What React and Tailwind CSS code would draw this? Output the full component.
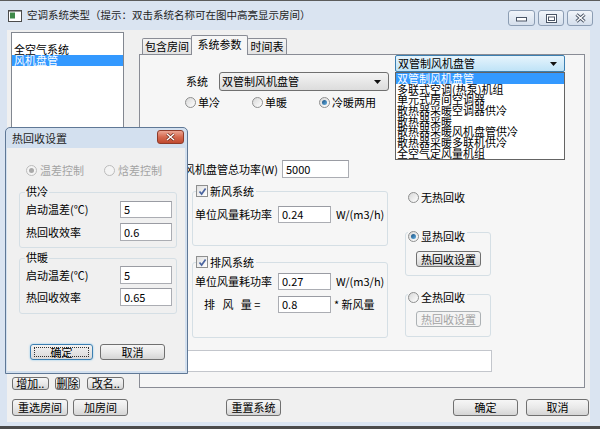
import React from "react";

const FONT = "font-['Noto_Sans_CJK_SC','Noto_Sans',sans-serif]";

function Radio({ checked, disabled }) {
    return (
        <span className={`inline-flex w-[11px] h-[11px] shrink-0 rounded-full border items-center justify-center ${disabled ? 'border-[#bcbcbc] bg-[#f4f4f4]' : 'border-[#8e8f8f] bg-linear-to-br from-[#d8d8d8] to-white'}`}>
            {checked && (
                <span className={`w-[5px] h-[5px] rounded-full ${disabled ? 'bg-[#a9a9a9]' : 'bg-linear-to-br from-[#1b4f7e] to-[#63b2e6]'}`} />
            )}
        </span>
    );
}

function Check() {
    return (
        <span className="inline-flex w-[12px] h-[12px] shrink-0 border border-[#8e8f8f] bg-linear-to-br from-[#e0e0e0] to-white items-center justify-center">
            <svg width="9" height="9" viewBox="0 0 9 9">
                <path d="M1.5 4.5 L3.6 7 L7.6 1.5" stroke="#4b65a0" strokeWidth="1.7" fill="none" />
            </svg>
        </span>
    );
}

function Btn({ children, className = "", disabled, focused }) {
    let look = "border-[#707070] bg-linear-to-b from-[#f6f6f6] via-[#e9e9e9] to-[#d5d5d5]";
    if (disabled) look = "border-[#adb2b5] bg-[#f4f4f4] text-[#a3a3a3]";
    if (focused) look = "border-[#3c7fb1] bg-linear-to-b from-[#f2f2f2] to-[#d9d9d9] shadow-[0_0_2px_#7cc0ec]";
    return (
        <div className={`flex items-center justify-center rounded-[3px] border text-[11px] leading-none ${look} ${className}`}>
            {focused ? (
                <span className="w-[calc(100%-6px)] h-[calc(100%-4px)] border border-dotted border-[#333] flex items-center justify-center">{children}</span>
            ) : children}
        </div>
    );
}

function Field({ value, className = "" }) {
    return (
        <div className={`bg-white border border-[#abadb3] border-t-[#9a9ca3] text-[11px] leading-none flex items-center pl-[3px] ${className}`}>
            {value}
        </div>
    );
}

function CapBtn({ children, className = "" }) {
    return (
        <div className={`h-[16px] rounded-[3px] border border-[#8c9db3] bg-linear-to-b from-[#f1f5fa] to-[#d5dfec] flex items-center justify-center ${className}`}>
            {children}
        </div>
    );
}

const comboItems = [
    '双管制风机盘管',
    '多联式空调(热泵)机组',
    '单元式房间空调器',
    '散热器采暖空调器供冷',
    '散热器采暖',
    '散热器采暖风机盘管供冷',
    '散热器采暖多联机供冷',
    '全空气定风量机组',
];

export default function App() {
    return (
        <div className={`relative w-[600px] h-[429px] overflow-hidden bg-[#dae4f1] border-t border-t-[#5c5c5c] border-b-[3px] border-b-[#4b4b4b] text-black ${FONT}`}>
            {/* TITLE BAR */}
            <div className="h-[29px] flex">
                <div className="flex items-center pl-[8px] gap-[5px]">
                    <svg width="14" height="12" viewBox="0 0 14 12">
                        <rect x="0.5" y="0.5" width="13" height="11" fill="#fff" stroke="#4c4c4c" />
                        <rect x="2" y="2.5" width="5" height="6" fill="#3f8a4a" />
                        <rect x="1" y="1" width="12" height="1" fill="#9a9a9a" />
                    </svg>
                    <span className="text-[10.5px] text-[#1e1e1e] leading-none">空调系统类型（提示：双击系统名称可在图中高亮显示房间）</span>
                </div>
                <div className="ml-auto mr-[7px] mt-[9px] flex gap-[3px]">
                    <CapBtn className="w-[27px] items-end pb-[3px]">
                        <svg width="11" height="5" viewBox="0 0 11 5">
                            <rect x="0.5" y="0.5" width="10" height="3.5" fill="#fff" stroke="#4a5566" />
                        </svg>
                    </CapBtn>
                    <CapBtn className="w-[26px]">
                        <svg width="11" height="9" viewBox="0 0 11 9">
                            <rect x="0.5" y="0.5" width="10" height="8" fill="#fff" stroke="#4a5566" />
                            <rect x="2.5" y="3" width="6" height="3.5" fill="none" stroke="#4a5566" />
                        </svg>
                    </CapBtn>
                    <CapBtn className="w-[26px]">
                        <svg width="11" height="10" viewBox="0 0 11 10">
                            <path d="M1.5 1.5 L9.5 8.5 M9.5 1.5 L1.5 8.5" stroke="#4a5566" strokeWidth="3.2" />
                            <path d="M1.5 1.5 L9.5 8.5 M9.5 1.5 L1.5 8.5" stroke="#fff" strokeWidth="1.3" />
                        </svg>
                    </CapBtn>
                </div>
            </div>

            {/* CLIENT */}
            <div className="ml-[7px] w-[583px] h-[392px] bg-[#f0f0f0] flex flex-col text-[11px]">
                <div className="h-[361px] pt-[2px] flex">
                    {/* system list */}
                    <div className="ml-[4px] w-[113px] flex flex-col">
                        <div className="h-[340px] border border-[#828790] bg-white pt-[11px]">
                            <div className="h-[11px] leading-[11px] pl-[2px]">全空气系统</div>
                            <div className="h-[11px] leading-[11px] pl-[2px] bg-[#3399ff] text-white">风机盘管</div>
                        </div>
                        <div className="mt-[5px] flex h-[13px]">
                            <Btn className="ml-[1px] w-[38px]">增加..</Btn>
                            <Btn className="ml-[6px] w-[27px]">删除</Btn>
                            <Btn className="ml-[7px] w-[38px]">改名..</Btn>
                        </div>
                    </div>

                    {/* tab control */}
                    <div className="ml-[15px] w-[446px] flex flex-col">
                        <div className="h-[22px] flex items-end pl-[3px]">
                            <div className="w-[50px] h-[16px] border border-b-0 border-[#898c95] rounded-t-[2px] bg-linear-to-b from-[#f4f4f4] to-[#e2e2e2] flex items-center justify-center">包含房间</div>
                            <div className="relative z-10 -mb-px -ml-px w-[57px] h-[20px] border border-b-0 border-[#898c95] rounded-t-[2px] bg-[#f6f6f6] flex items-center justify-center pb-[3px]">系统参数</div>
                            <div className="-ml-px w-[40px] h-[16px] border border-b-0 border-[#898c95] rounded-t-[2px] bg-linear-to-b from-[#f4f4f4] to-[#e2e2e2] flex items-center justify-center">时间表</div>
                        </div>
                        <div className="relative h-[334px] border border-[#898c95] bg-[#f6f6f6] flex flex-col">
                            {/* open combo */}
                            <div className="relative h-[17px]">
                                <div className="ml-[255px] w-[170px] h-[17px] border border-[#3c7fb1] rounded-[2px] bg-linear-to-b from-[#e6f4fc] to-[#bfe3f7] flex items-center pl-[2px] pr-[7px]">
                                    <span className="leading-none">双管制风机盘管</span>
                                    <svg className="ml-auto" width="7" height="4" viewBox="0 0 7 4"><path d="M0 0 L7 0 L3.5 4 Z" fill="#111" /></svg>
                                </div>
                                <div className="absolute z-20 top-[17px] left-[255px] w-[170px] h-[88px] bg-white border border-[#646464]">
                                    {comboItems.map((t, i) => (
                                        <div key={t} className={`h-[10.7px] leading-[10.7px] pl-[1px] whitespace-nowrap ${i === 0 ? 'bg-[#3399ff] text-white' : ''}`}>{t}</div>
                                    ))}
                                </div>
                            </div>

                            {/* 系统 combo */}
                            <div className="h-[19px] flex items-center">
                                <span className="ml-[46px] w-[33px] leading-none">系统</span>
                                <div className="w-[170px] h-[19px] border border-[#707070] rounded-[3px] bg-linear-to-b from-[#f4f4f4] to-[#dcdcdc] flex items-center pl-[2px] pr-[7px]">
                                    <span className="leading-none">双管制风机盘管</span>
                                    <svg className="ml-auto" width="7" height="4" viewBox="0 0 7 4"><path d="M0 0 L7 0 L3.5 4 Z" fill="#111" /></svg>
                                </div>
                            </div>

                            {/* mode radios */}
                            <div className="mt-[5px] h-[12px] flex items-center pl-[45px]">
                                <div className="w-[67px] flex items-center gap-[2px]"><Radio /><span className="leading-none">单冷</span></div>
                                <div className="w-[67px] flex items-center gap-[2px]"><Radio /><span className="leading-none">单暖</span></div>
                                <div className="flex items-center gap-[2px]"><Radio checked /><span className="leading-none">冷暖两用</span></div>
                            </div>

                            {/* total power */}
                            <div className="mt-[52px] h-[18px] flex items-center">
                                <span className="w-[138px] text-right leading-none">风机盘管总功率(W)</span>
                                <Field value="5000" className="ml-[4px] w-[67px] h-[18px]" />
                            </div>

                            <div className="mt-[5px] flex">
                                {/* fan groups */}
                                <div className="ml-[52px] w-[196px] pt-[8px] flex flex-col">
                                    <div className="relative h-[55px] border border-[#d5dfe5] rounded-[3px]">
                                        <div className="absolute -top-[7px] left-[3px] flex items-center gap-[2px] bg-[#f6f6f6] pr-[2px]">
                                            <Check /><span className="leading-none">新风系统</span>
                                        </div>
                                        <div className="mt-[14px] h-[17px] flex items-center">
                                            <span className="ml-[2px] w-[83px] leading-none">单位风量耗功率</span>
                                            <Field value="0.24" className="w-[53px] h-[17px]" />
                                            <span className="ml-[5px] leading-none">W/(m3/h)</span>
                                        </div>
                                    </div>
                                    <div className="relative mt-[16px] h-[76px] border border-[#d5dfe5] rounded-[3px]">
                                        <div className="absolute -top-[7px] left-[3px] flex items-center gap-[2px] bg-[#f6f6f6] pr-[2px]">
                                            <Check /><span className="leading-none">排风系统</span>
                                        </div>
                                        <div className="mt-[10px] h-[17px] flex items-center">
                                            <span className="ml-[2px] w-[83px] leading-none">单位风量耗功率</span>
                                            <Field value="0.27" className="w-[53px] h-[17px]" />
                                            <span className="ml-[5px] leading-none">W/(m3/h)</span>
                                        </div>
                                        <div className="mt-[6px] h-[17px] flex items-center">
                                            <span className="ml-[11px] w-[74px] leading-none whitespace-pre">排   风   量 =</span>
                                            <Field value="0.8" className="w-[53px] h-[17px]" />
                                            <span className="ml-[3px] leading-none">* 新风量</span>
                                        </div>
                                    </div>
                                </div>

                                {/* heat recovery */}
                                <div className="ml-[17px] w-[86px] flex flex-col">
                                    <div className="mt-[8px] h-[12px] ml-[3px] flex items-center gap-[2px]">
                                        <Radio /><span className="leading-none">无热回收</span>
                                    </div>
                                    <div className="relative mt-[29px] h-[44px] border border-[#d5dfe5] rounded-[3px]">
                                        <div className="absolute -top-[3px] left-[2px] h-[12px] flex items-center gap-[2px] bg-[#f6f6f6] pr-[2px]">
                                            <Radio checked /><span className="leading-none">显热回收</span>
                                        </div>
                                        <Btn className="mt-[18px] ml-[10px] w-[65px] h-[16px]">热回收设置</Btn>
                                    </div>
                                    <div className="relative mt-[18px] h-[43px] border border-[#d5dfe5] rounded-[3px]">
                                        <div className="absolute -top-[4px] left-[2px] h-[12px] flex items-center gap-[2px] bg-[#f6f6f6] pr-[2px]">
                                            <Radio /><span className="leading-none">全热回收</span>
                                        </div>
                                        <Btn disabled className="mt-[16px] ml-[10px] w-[65px] h-[16px]">热回收设置</Btn>
                                    </div>
                                </div>
                            </div>

                            {/* description box */}
                            <div className="mt-[12px] ml-[10px] w-[342px] h-[22px] bg-white border border-[#c3c6cc]" />
                        </div>
                    </div>
                </div>

                {/* bottom buttons */}
                <div className="mt-[8px] h-[17px] flex">
                    <Btn className="ml-[5px] w-[56px]">重选房间</Btn>
                    <Btn className="ml-[5px] w-[55px]">加房间</Btn>
                    <Btn className="ml-[98px] w-[55px]">重置系统</Btn>
                    <Btn className="ml-[172px] w-[65px]">确定</Btn>
                    <Btn className="ml-[8px] w-[63px]">取消</Btn>
                </div>
            </div>

            {/* HEAT RECOVERY DIALOG */}
            <div className="absolute z-30 left-[5px] top-[126px] w-[183px] h-[247px] border border-[#5f7896] rounded-t-[5px] bg-[#d3e0ef] flex flex-col text-[11px]">
                <div className="h-[20px] flex">
                    <span className="pl-[6px] self-center leading-none text-[#1e1e1e]">热回收设置</span>
                    <div className="ml-auto mr-[3px] mt-[2px] w-[27px] h-[14px] rounded-[3px] border border-[#8e3b2a] bg-linear-to-b from-[#eba593] via-[#d5694f] to-[#c04a30] flex items-center justify-center">
                        <svg width="9" height="8" viewBox="0 0 9 8">
                            <path d="M1 1 L8 7 M8 1 L1 7" stroke="#6d2a1c" strokeWidth="2.8" />
                            <path d="M1 1 L8 7 M8 1 L1 7" stroke="#fff" strokeWidth="1.4" />
                        </svg>
                    </div>
                </div>
                <div className="ml-[1px] w-[178px] h-[223px] bg-[#f0f0f0] flex flex-col">
                    <div className="mt-[16px] h-[12px] flex items-center pl-[19px] text-[#a3a3a3]">
                        <div className="w-[78px] flex items-center gap-[3px]"><Radio checked disabled /><span className="leading-none">温差控制</span></div>
                        <div className="flex items-center gap-[3px]"><Radio disabled /><span className="leading-none">焓差控制</span></div>
                    </div>

                    <div className="relative mt-[16px] ml-[12px] w-[158px] h-[56px] border border-[#d5dfe5] rounded-[3px]">
                        <span className="absolute -top-[7px] left-[5px] px-[1px] bg-[#f0f0f0] leading-none">供冷</span>
                        <div className="mt-[8px] h-[17px] flex items-center">
                            <span className="ml-[6px] w-[94px] leading-none">启动温差(℃)</span>
                            <Field value="5" className="w-[52px] h-[17px]" />
                        </div>
                        <div className="mt-[5px] h-[18px] flex items-center">
                            <span className="ml-[6px] w-[94px] leading-none">热回收效率</span>
                            <Field value="0.6" className="w-[52px] h-[18px]" />
                        </div>
                    </div>

                    <div className="relative mt-[10px] ml-[12px] w-[158px] h-[56px] border border-[#d5dfe5] rounded-[3px]">
                        <span className="absolute -top-[7px] left-[5px] px-[1px] bg-[#f0f0f0] leading-none">供暖</span>
                        <div className="mt-[7px] h-[18px] flex items-center">
                            <span className="ml-[6px] w-[94px] leading-none">启动温差(℃)</span>
                            <Field value="5" className="w-[52px] h-[18px]" />
                        </div>
                        <div className="mt-[4px] h-[18px] flex items-center">
                            <span className="ml-[6px] w-[94px] leading-none">热回收效率</span>
                            <Field value="0.65" className="w-[52px] h-[18px]" />
                        </div>
                    </div>

                    <div className="mt-[30px] h-[16px] flex">
                        <Btn focused className="ml-[23px] w-[63px]">确定</Btn>
                        <Btn className="ml-[7px] w-[65px]">取消</Btn>
                    </div>
                </div>
            </div>
        </div>
    );
}
